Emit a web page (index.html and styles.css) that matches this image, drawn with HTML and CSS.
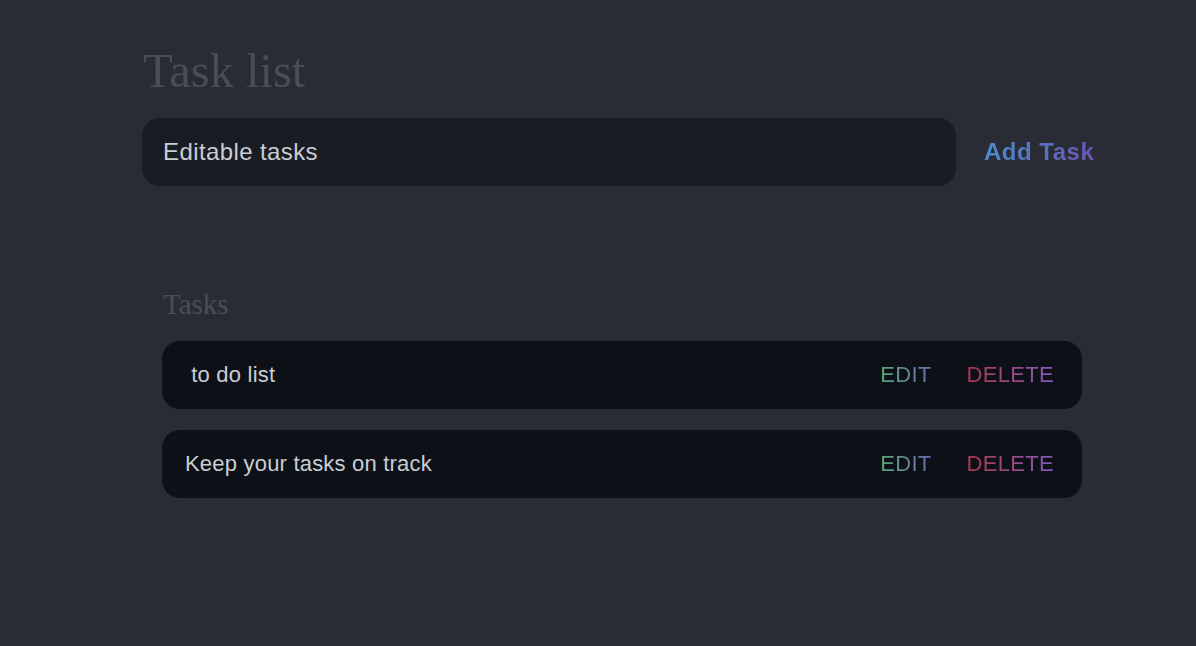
FILE: index.html
```html
<!DOCTYPE html>
<html lang="en">
<head>
<meta charset="utf-8">
<title>Task list</title>
<link rel="stylesheet" href="styles.css">
</head>
<body>
<main class="app">
  <h1 class="title">Task list</h1>
  <form class="add-form">
    <div class="add-input">Editable tasks</div>
    <button type="button" class="add-btn">Add Task</button>
  </form>
  <section class="tasks">
    <h2 class="tasks-title">Tasks</h2>
    <ul class="task-list">
      <li class="task">
        <span class="task-text">&nbsp;to do list</span>
        <div class="task-actions">
          <button type="button" class="act edit">EDIT</button>
          <button type="button" class="act delete">DELETE</button>
        </div>
      </li>
      <li class="task">
        <span class="task-text">Keep your tasks on track</span>
        <div class="task-actions">
          <button type="button" class="act edit">EDIT</button>
          <button type="button" class="act delete">DELETE</button>
        </div>
      </li>
    </ul>
  </section>
</main>
</body>
</html>
```
FILE: styles.css
```css
html, body {
  margin: 0;
  padding: 0;
  background: #292c35;
  height: 100%;
}

.app {
  padding: 42px 0 0 142px;
}

.title {
  margin: 0 0 0 1px;
  font-family: "Liberation Serif", "Times New Roman", serif;
  font-weight: normal;
  font-size: 48.5px;
  line-height: 57px;
  color: #4a4d57;
}

.add-form {
  display: flex;
  align-items: center;
  margin-top: 19px;
}

.add-input {
  width: 814px;
  height: 68px;
  box-sizing: border-box;
  padding: 0 21px;
  display: flex;
  align-items: center;
  background: #1a1c23;
  border-radius: 18px;
  font-family: "Liberation Sans", Arial, sans-serif;
  font-size: 24px;
  letter-spacing: 0.4px;
  color: #c9cdd4;
}

.add-btn {
  margin-left: 28px;
  padding: 0;
  border: none;
  background: linear-gradient(90deg, #4b8ccb 0%, #6b55b3 100%);
  -webkit-background-clip: text;
  background-clip: text;
  color: transparent;
  font-family: "Liberation Sans", Arial, sans-serif;
  font-weight: bold;
  font-size: 24px;
  letter-spacing: 0.5px;
  cursor: pointer;
}

.tasks {
  margin: 102px 0 0 20px;
  width: 920px;
}

.tasks-title {
  margin: 0 0 21px 1px;
  font-family: "Liberation Serif", "Times New Roman", serif;
  font-weight: normal;
  font-size: 29px;
  line-height: 32px;
  color: #4a4d57;
}

.task-list {
  list-style: none;
  margin: 0;
  padding: 0;
  display: flex;
  flex-direction: column;
  gap: 21px;
}

.task {
  height: 68px;
  box-sizing: border-box;
  padding: 0 28px 0 23px;
  display: flex;
  align-items: center;
  justify-content: space-between;
  background: #0e1017;
  border-radius: 18px;
}

.task-text {
  font-family: "Liberation Sans", Arial, sans-serif;
  font-size: 22px;
  letter-spacing: 0.2px;
  color: #c9cdd4;
}

.task-actions {
  display: flex;
  gap: 35px;
}

.act {
  padding: 0;
  border: none;
  -webkit-background-clip: text;
  background-clip: text;
  color: transparent;
  font-family: "Liberation Sans", Arial, sans-serif;
  font-size: 22px;
  letter-spacing: 0.3px;
  cursor: pointer;
}

.edit {
  background-image: linear-gradient(90deg, #58a874 0%, #6a6cb4 100%);
}

.delete {
  background-image: linear-gradient(90deg, #a83a4e 0%, #8858bc 100%);
}
```
